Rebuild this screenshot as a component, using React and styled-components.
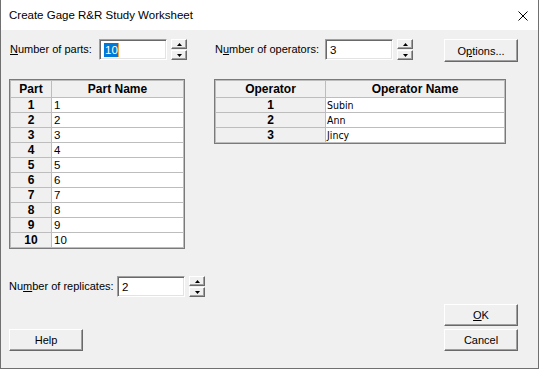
import React from "react";
import styled, { createGlobalStyle } from "styled-components";

const GlobalStyle = createGlobalStyle`
  html, body {
    margin: 0;
    padding: 0;
    background: #ffffff;
  }
  * {
    box-sizing: border-box;
  }
`;

const parts = ["1", "2", "3", "4", "5", "6", "7", "8", "9", "10"];
const operators = ["Subin", "Ann", "Jincy"];

export default function App() {
  return (
    <>
      <GlobalStyle />
      <Window>
        <TitleBar>
          <Title>Create Gage R&amp;R Study Worksheet</Title>
          <CloseIcon viewBox="0 0 10 10" width="10" height="10">
            <path d="M0.5 0.5 L9.5 9.5 M9.5 0.5 L0.5 9.5" stroke="#000" strokeWidth="1" />
          </CloseIcon>
        </TitleBar>

        <Body>
          <TopRow>
            <Label $width={90}>
              <u>N</u>umber of parts:
            </Label>
            <TextBox>
              <Selected>10</Selected>
            </TextBox>
            <Spinner />
            <Label $width={111} $offset={27}>
              N<u>u</u>mber of operators:
            </Label>
            <TextBox>3</TextBox>
            <Spinner />
            <PushButton $push>
              O<u>p</u>tions...
            </PushButton>
          </TopRow>

          <TablesRow>
            <Grid $width={176}>
              <Table>
                <colgroup>
                  <col style={{ width: 41 }} />
                  <col />
                </colgroup>
                <thead>
                  <tr>
                    <HeadCell>Part</HeadCell>
                    <HeadCell>Part Name</HeadCell>
                  </tr>
                </thead>
                <tbody>
                  {parts.map((p, i) => (
                    <tr key={p}>
                      <RowHead>{i + 1}</RowHead>
                      <DataCell>{p}</DataCell>
                    </tr>
                  ))}
                </tbody>
              </Table>
            </Grid>

            <Grid $width={292}>
              <Table>
                <colgroup>
                  <col style={{ width: 110 }} />
                  <col />
                </colgroup>
                <thead>
                  <tr>
                    <HeadCell>Operator</HeadCell>
                    <HeadCell>Operator Name</HeadCell>
                  </tr>
                </thead>
                <tbody>
                  {operators.map((o, i) => (
                    <tr key={o}>
                      <RowHead>{i + 1}</RowHead>
                      <DataCell $tight>{o}</DataCell>
                    </tr>
                  ))}
                </tbody>
              </Table>
            </Grid>
          </TablesRow>

          <ReplicatesRow>
            <Label $width={108} $shift={-1}>
              Nu<u>m</u>ber of replicates:
            </Label>
            <TextBox>2</TextBox>
            <Spinner />
          </ReplicatesRow>

          <BottomRow>
            <PushButton>Help</PushButton>
            <ButtonStack>
              <PushButton>
                <u>O</u>K
              </PushButton>
              <PushButton>Cancel</PushButton>
            </ButtonStack>
          </BottomRow>
        </Body>
      </Window>
    </>
  );
}

function Spinner() {
  return (
    <SpinWrap>
      <SpinButton>
        <Arrow viewBox="0 0 5 3" width="5" height="3">
          <path d="M2.5 0 L5 3 L0 3 Z" fill="#000" />
        </Arrow>
      </SpinButton>
      <SpinButton>
        <Arrow viewBox="0 0 5 3" width="5" height="3">
          <path d="M0 0 L5 0 L2.5 3 Z" fill="#000" />
        </Arrow>
      </SpinButton>
    </SpinWrap>
  );
}

const Window = styled.div`
  width: 539px;
  height: 369px;
  display: flex;
  flex-direction: column;
  background: #f0f0f0;
  border: 1px solid #707070;
  border-top: none;
  font-family: "Liberation Sans", Arial, sans-serif;
  font-size: 11px;
  color: #000;
`;

const TitleBar = styled.div`
  height: 30px;
  flex: none;
  display: flex;
  align-items: center;
  justify-content: space-between;
  padding: 0 10px 0 8px;
  background: #ffffff;
`;

const Title = styled.span`
  font-size: 11.5px;
  color: #000;
`;

const CloseIcon = styled.svg`
  display: block;
  margin-top: 1px;
`;

const Body = styled.div`
  flex: 1;
  display: flex;
  flex-direction: column;
  padding: 9px 20px 17px 8px;
`;

const TopRow = styled.div`
  display: flex;
  align-items: flex-start;
`;

const Label = styled.label`
  width: ${(p) => p.$width}px;
  margin-left: ${(p) => (p.$offset || 0) + (p.$shift || 0)}px;
  margin-right: ${(p) => -(p.$shift || 0)}px;
  padding-left: 1px;
  height: 20px;
  line-height: 20px;
  white-space: nowrap;
  u {
    text-decoration: underline;
    text-underline-offset: 1px;
  }
`;

const TextBox = styled.div`
  width: 68px;
  height: 21px;
  padding: 0 4px;
  display: flex;
  align-items: center;
  background: #ffffff;
  border: 1px solid;
  border-color: #a0a0a0 #ffffff #ffffff #a0a0a0;
  box-shadow: inset 1px 1px #696969, inset -1px -1px #e3e3e3;
  font-size: 11.5px;
`;

const Selected = styled.span`
  background: #0078d7;
  color: #ffffff;
  padding: 0 0 0 1px;
  line-height: 14px;
  border-right: 1px solid #f0a040;
`;

const SpinWrap = styled.div`
  margin-left: 4px;
  width: 16px;
  height: 21px;
  display: flex;
  flex-direction: column;
  justify-content: space-between;
`;

const SpinButton = styled.div`
  height: 10px;
  display: flex;
  align-items: center;
  justify-content: center;
  background: #f0f0f0;
  border: 1px solid;
  border-color: #ffffff #696969 #696969 #ffffff;
  box-shadow: inset -1px -1px #a0a0a0;
`;

const Arrow = styled.svg`
  display: block;
`;

const PushButton = styled.button`
  width: 74px;
  height: ${(p) => (p.$push ? 23 : 22)}px;
  margin-left: ${(p) => (p.$push ? "auto" : "0")};
  padding: 0;
  background: #f0f0f0;
  border: 1px solid;
  border-color: #ffffff #696969 #696969 #ffffff;
  box-shadow: inset -1px -1px #a0a0a0;
  font-family: "Liberation Sans", Arial, sans-serif;
  font-size: 11px;
  color: #000;
  cursor: default;
  u {
    text-decoration: underline;
    text-underline-offset: 1px;
  }
`;

const TablesRow = styled.div`
  margin-top: 17px;
  display: flex;
  align-items: flex-start;
  gap: 29px;
`;

const Grid = styled.div`
  width: ${(p) => p.$width}px;
  border: 1px solid #7a7a7a;
  background: #ffffff;
`;

const Table = styled.table`
  width: 100%;
  border-collapse: collapse;
  table-layout: fixed;
`;

const HeadCell = styled.th`
  height: 17px;
  padding: 0;
  background: #f0f0f0;
  border: 1px solid #bdbdbd;
  font-family: "Liberation Sans", Arial, sans-serif;
  font-size: 12px;
  font-weight: bold;
  text-align: center;
  vertical-align: middle;
`;

const RowHead = styled.th`
  height: 15px;
  padding: 0;
  background: #f0f0f0;
  border: 1px solid #bdbdbd;
  font-family: "Liberation Sans", Arial, sans-serif;
  font-size: 12px;
  font-weight: bold;
  text-align: center;
  line-height: 13px;
`;

const DataCell = styled.td`
  height: 15px;
  padding: 0 0 0 ${(p) => (p.$tight ? 1 : 2)}px;
  background: #ffffff;
  border: 1px solid #bdbdbd;
  font-family: ${(p) =>
    p.$tight ? '"DejaVu Sans Condensed", "Liberation Sans", sans-serif' : '"Liberation Sans", Arial, sans-serif'};
  font-size: ${(p) => (p.$tight ? 10.5 : 11.5)}px;
  line-height: 13px;
  text-align: left;
`;

const ReplicatesRow = styled.div`
  margin-top: 27px;
  display: flex;
  align-items: flex-start;
`;

const BottomRow = styled.div`
  margin-top: auto;
  display: flex;
  justify-content: space-between;
  align-items: flex-end;
`;

const ButtonStack = styled.div`
  display: flex;
  flex-direction: column;
  gap: 3px;
`;
